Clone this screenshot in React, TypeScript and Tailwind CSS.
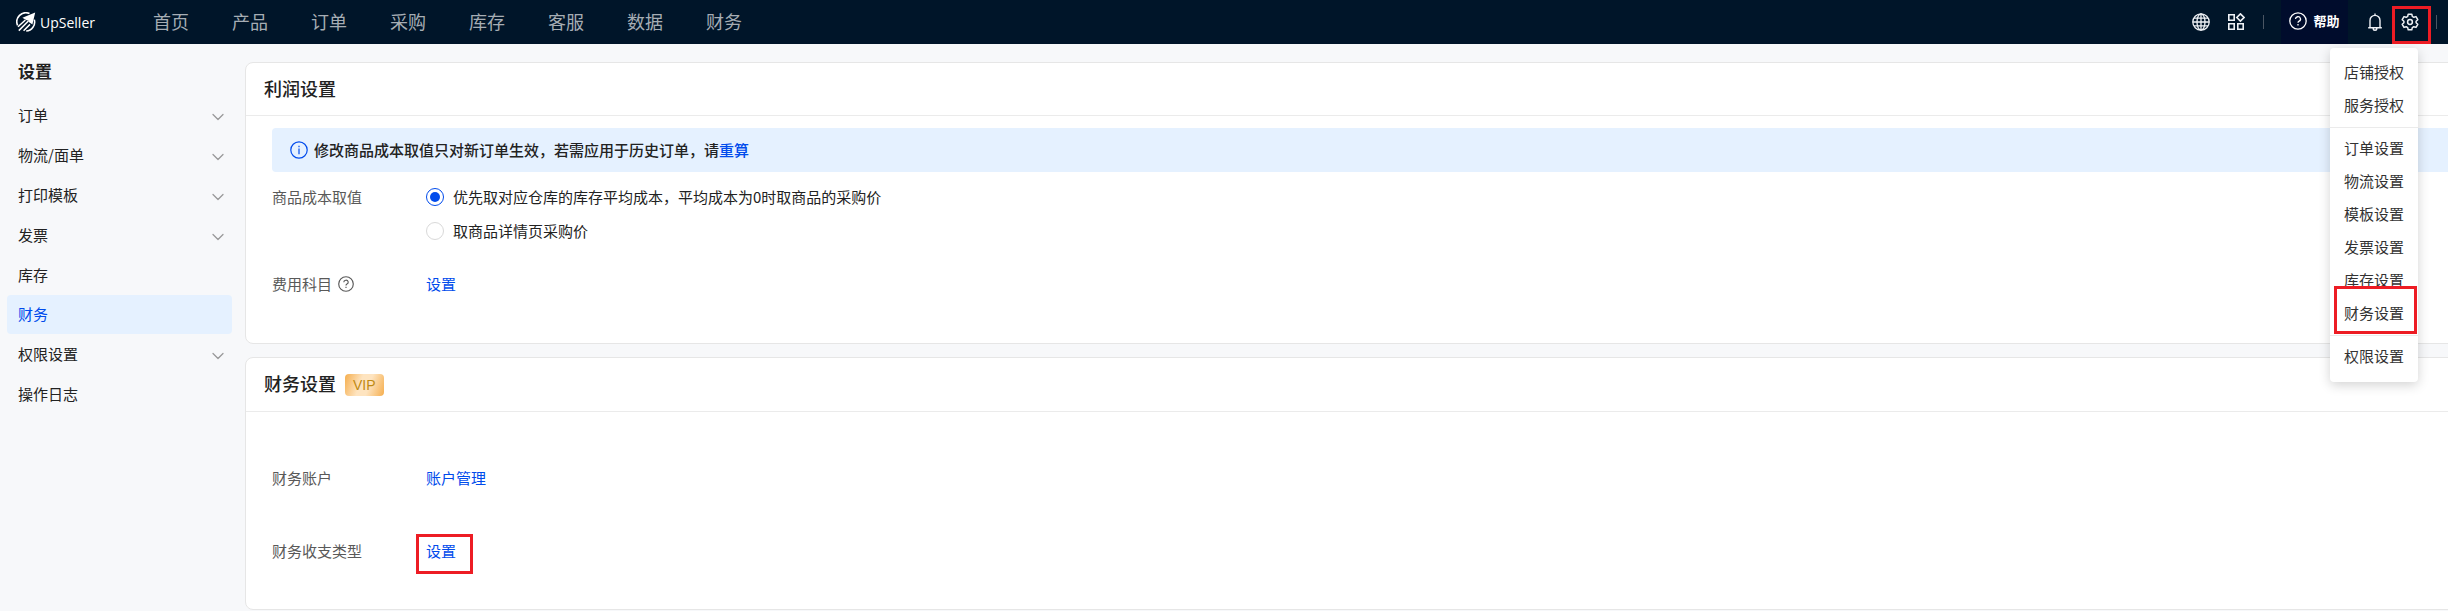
import { useState } from 'react'
import { ChevronDown } from 'lucide-react'

interface SideItem {
  label: string
  expandable?: boolean
  active?: boolean
}

const navItems = ['首页', '产品', '订单', '采购', '库存', '客服', '数据', '财务']

const sideItems: SideItem[] = [
  { label: '订单', expandable: true },
  { label: '物流/面单', expandable: true },
  { label: '打印模板', expandable: true },
  { label: '发票', expandable: true },
  { label: '库存' },
  { label: '财务', active: true },
  { label: '权限设置', expandable: true },
  { label: '操作日志' },
]

const menuGroups = [
  ['店铺授权', '服务授权'],
  ['订单设置', '物流设置', '模板设置', '发票设置', '库存设置', '财务设置'],
  ['权限设置'],
]

function Logo() {
  return (
    <a href="#" className="flex w-[137px] shrink-0 items-center gap-1 text-white">
      <svg viewBox="0 0 20 20" className="h-5 w-5" fill="none" stroke="currentColor" strokeWidth="1.6">
        <path d="M13.5 1.6A9 9 0 0 0 1.6 13.4" />
        <path d="M18.3 7.6A9 9 0 0 1 10.2 19" />
        <path d="M19.2.6 6.4 5.8l4.2 2.4 1.6.2.6 1.6 3.6 2.6z" fill="currentColor" stroke="none" />
        <path d="M9.4 8 2 14.8M12.4 9 2.8 18.6M14 12.4 7.6 18.8" strokeWidth="1.5" />
      </svg>
      <span className="font-['Open_Sans'] text-[14px] font-medium">UpSeller</span>
    </a>
  )
}

function GlobeIcon() {
  return (
    <svg viewBox="0 0 18 18" className="h-[18px] w-[18px]" fill="none" stroke="currentColor" strokeWidth="1.3">
      <circle cx="9" cy="9" r="8.2" />
      <ellipse cx="9" cy="9" rx="4" ry="8.2" />
      <path d="M9 .8v16.4M.8 9h16.4M2 5.2h14M2 12.8h14" />
    </svg>
  )
}

function AppsIcon() {
  return (
    <svg viewBox="0 0 18 18" className="h-[18px] w-[18px]" fill="none" stroke="currentColor" strokeWidth="1.6">
      <path d="M1.8 1.8h5.4v5.4H1.8zM1.8 10.8h5.4v5.4H1.8zM10.8 10.8h5.4v5.4h-5.4z" />
      <path d="m13.4 .9 3.6 3.6-3.6 3.6-3.6-3.6z" />
    </svg>
  )
}

function QuestionIcon({ className }: { className: string }) {
  return (
    <svg viewBox="0 0 18 18" className={className} fill="none" stroke="currentColor" strokeWidth="1.3">
      <circle cx="9" cy="9" r="8.2" />
      <path d="M6.5 7a2.5 2.3 0 1 1 3.6 2.1c-.8.4-1.1.8-1.1 1.7" />
      <path d="M9 12v1.4" />
    </svg>
  )
}

function BellIcon() {
  return (
    <svg viewBox="0 0 18 18" className="h-[18px] w-[18px]" fill="none" stroke="currentColor" strokeWidth="1.4">
      <path d="M9 .4v1.8M2.2 14.8h13.6M4 14.8V7.4a5 5 0 0 1 10 0v7.4M7.2 15.4a1.8 1.8 0 0 0 3.6 0" />
    </svg>
  )
}

function GearIcon() {
  return (
    <svg viewBox="0 0 18 18" className="h-[18px] w-[18px]" fill="none" stroke="currentColor" strokeWidth="1.5" strokeLinejoin="round">
      <path d="M7.2 1.2h3.6l.5 2.2 1.5.9 2.2-.7 1.8 3.1-1.7 1.5v1.6l1.7 1.5-1.8 3.1-2.2-.7-1.5.9-.5 2.2H7.2l-.5-2.2-1.5-.9-2.2.7-1.8-3.1 1.7-1.5V8.2L1.200 6.700 3 3.600l2.200.7 1.500-.9z" />
      <circle cx="9" cy="9" r="2.4" />
    </svg>
  )
}

function InfoIcon() {
  return (
    <svg viewBox="0 0 18 18" className="h-[18px] w-[18px] text-[#004bec]" fill="none" stroke="currentColor" strokeWidth="1.2">
      <circle cx="9" cy="9" r="8.2" />
      <path d="M9 7.6v5.6M9 4.8v1.4" />
    </svg>
  )
}

function SettingsMenu() {
  return (
    <div className="absolute top-12 right-[30px] z-20 w-[88px] rounded bg-white pt-[7px] pb-2.5 shadow-[0_3px_12px_rgba(0,0,0,0.18)]">
      {menuGroups.map((group, i) => (
        <ul key={group[0]} className={i > 0 ? 'mt-1.5 border-t border-[#ebebeb] pt-[3px]' : ''}>
          {group.map((item) => (
            <li key={item} className="relative">
              <a href="#" className="block h-[33px] pl-[14px] text-[15px] leading-[33px] text-[#333]">
                {item}
              </a>
              {item === '财务设置' && (
                <span className="pointer-events-none absolute -top-2.5 left-1 h-12 w-[83px] border-3 border-[#ed1c24]" />
              )}
            </li>
          ))}
        </ul>
      ))}
    </div>
  )
}

function Header() {
  const [open, setOpen] = useState(true)

  return (
    <header className="relative flex h-11 items-center bg-[#001529] pl-4 text-[#eef1f5]">
      <Logo />
      <nav className="flex items-center gap-[43px] pb-0.5 text-[18px] text-[#a6adb4]">
        {navItems.map((item) => (
          <a key={item} href="#">
            {item}
          </a>
        ))}
      </nav>
      <div className="ml-auto flex h-full items-center">
        <button aria-label="语言" className="mr-[17px]">
          <GlobeIcon />
        </button>
        <button aria-label="应用">
          <AppsIcon />
        </button>
        <span className="mr-[17px] ml-[18px] h-3.5 w-px bg-[#4a5663]" />
        <button className="flex h-full w-[67px] items-center justify-center gap-[6px] bg-[#000c2c] pb-0.5 text-[13px] font-bold text-white">
          <QuestionIcon className="h-[18px] w-[18px]" />
          帮助
        </button>
        <button aria-label="通知" className="ml-[18px]">
          <BellIcon />
        </button>
        <button
          aria-label="设置"
          aria-expanded={open}
          onClick={() => setOpen(!open)}
          className="mt-[6px] ml-2 flex h-[38px] w-[39px] items-center justify-center border-3 border-[#ed1c24] pr-1 pb-1.5"
        >
          <GearIcon />
        </button>
        <span className="mr-[11px] ml-[5px] h-3.5 w-px bg-[#4a5663]" />
      </div>
      {open && <SettingsMenu />}
    </header>
  )
}

function Sidebar() {
  return (
    <aside className="w-[238px] shrink-0 pt-[11px] pr-[6px] pl-[7px]">
      <h2 className="pl-[11px] text-[17px] leading-8 font-bold text-[#222]">设置</h2>
      <ul className="mt-2">
        {sideItems.map((item) => (
          <li key={item.label}>
            <a
              href="#"
              className={`flex items-center justify-between rounded pr-1 pl-[11px] text-[15px] ${
                item.active ? 'h-[39px] bg-[#e5f1ff] text-[#004bec]' : 'h-10 text-[#222]'
              }`}
            >
              {item.label}
              {item.expandable && <ChevronDown className="mt-1 h-5 w-5 text-[#999]" strokeWidth={1.5} />}
            </a>
          </li>
        ))}
      </ul>
    </aside>
  )
}

function ProfitCard() {
  const [costMode, setCostMode] = useState('avg')
  const radioClass =
    "h-[18px] w-[18px] appearance-none rounded-full border border-[#d9d9d9] bg-white p-[3px] before:block before:h-full before:w-full before:rounded-full before:content-[''] checked:border-[#004bec] checked:before:bg-[#004bec]"

  return (
    <section className="rounded-lg border border-[#e6e6e6] bg-white">
      <h3 className="border-b border-[#ebebeb] px-[18px] pb-0.5 text-[18px] leading-[50px] font-medium text-[#222]">
        利润设置
      </h3>
      <div className="px-[26px] pt-3 pb-[42px]">
        <div className="flex h-11 items-center gap-[6px] rounded bg-[#e5f1ff] px-[18px] text-[15px] font-medium text-[#222]">
          <InfoIcon />
          <p>
            修改商品成本取值只对新订单生效，若需应用于历史订单，请
            <a href="#" className="text-[#004bec]">
              重算
            </a>
          </p>
        </div>
        <div className="mt-2 flex text-[15px] leading-[34px]">
          <span className="w-[154px] text-[#595959]">商品成本取值</span>
          <div className="text-[#222]">
            <label className="flex items-center gap-[9px]">
              <input
                type="radio"
                name="cost"
                checked={costMode === 'avg'}
                onChange={() => setCostMode('avg')}
                className={radioClass}
              />
              优先取对应仓库的库存平均成本，平均成本为0时取商品的采购价
            </label>
            <label className="flex items-center gap-[9px]">
              <input
                type="radio"
                name="cost"
                checked={costMode === 'buy'}
                onChange={() => setCostMode('buy')}
                className={radioClass}
              />
              取商品详情页采购价
            </label>
          </div>
        </div>
        <div className="mt-[19px] flex text-[15px] leading-[34px]">
          <span className="flex w-[154px] items-center gap-[6px] text-[#595959]">
            费用科目
            <QuestionIcon className="h-4 w-4" />
          </span>
          <a href="#" className="text-[#004bec]">
            设置
          </a>
        </div>
      </div>
    </section>
  )
}

function FinanceCard() {
  return (
    <section className="rounded-lg border border-[#e6e6e6] bg-white">
      <div className="flex items-center gap-[9px] border-b border-[#ebebeb] px-[18px]">
        <h3 className="pb-0.5 text-[18px] leading-[51px] font-medium text-[#222]">财务设置</h3>
        <span className="rounded bg-linear-[110deg,#f5ae4e,#fee4c0_40%,#fee4c0_60%,#f5ae4e] px-2 font-['Liberation_Sans'] text-[14px] leading-[22px] text-[#c08a12]">
          VIP
        </span>
      </div>
      <div className="px-[26px] pt-[49px] pb-[41px] text-[15px] leading-[34px]">
        <div className="flex">
          <span className="w-[154px] text-[#595959]">财务账户</span>
          <a href="#" className="text-[#004bec]">
            账户管理
          </a>
        </div>
        <div className="mt-[39px] flex">
          <span className="w-[154px] text-[#595959]">财务收支类型</span>
          <span className="relative">
            <a href="#" className="text-[#004bec]">
              设置
            </a>
            <span className="pointer-events-none absolute top-0 -left-2.5 h-10 w-[57px] border-3 border-[#ed1c24]" />
          </span>
        </div>
      </div>
    </section>
  )
}

export default function App() {
  return (
    <div className="min-h-screen overflow-hidden bg-[#f7f8fa] font-['Noto_Sans_CJK_SC',sans-serif]">
      <Header />
      <div className="flex">
        <Sidebar />
        <main className="-mr-8 flex min-w-0 flex-1 flex-col gap-[13px] pt-[18px] pl-[7px]">
          <ProfitCard />
          <FinanceCard />
        </main>
      </div>
    </div>
  )
}
